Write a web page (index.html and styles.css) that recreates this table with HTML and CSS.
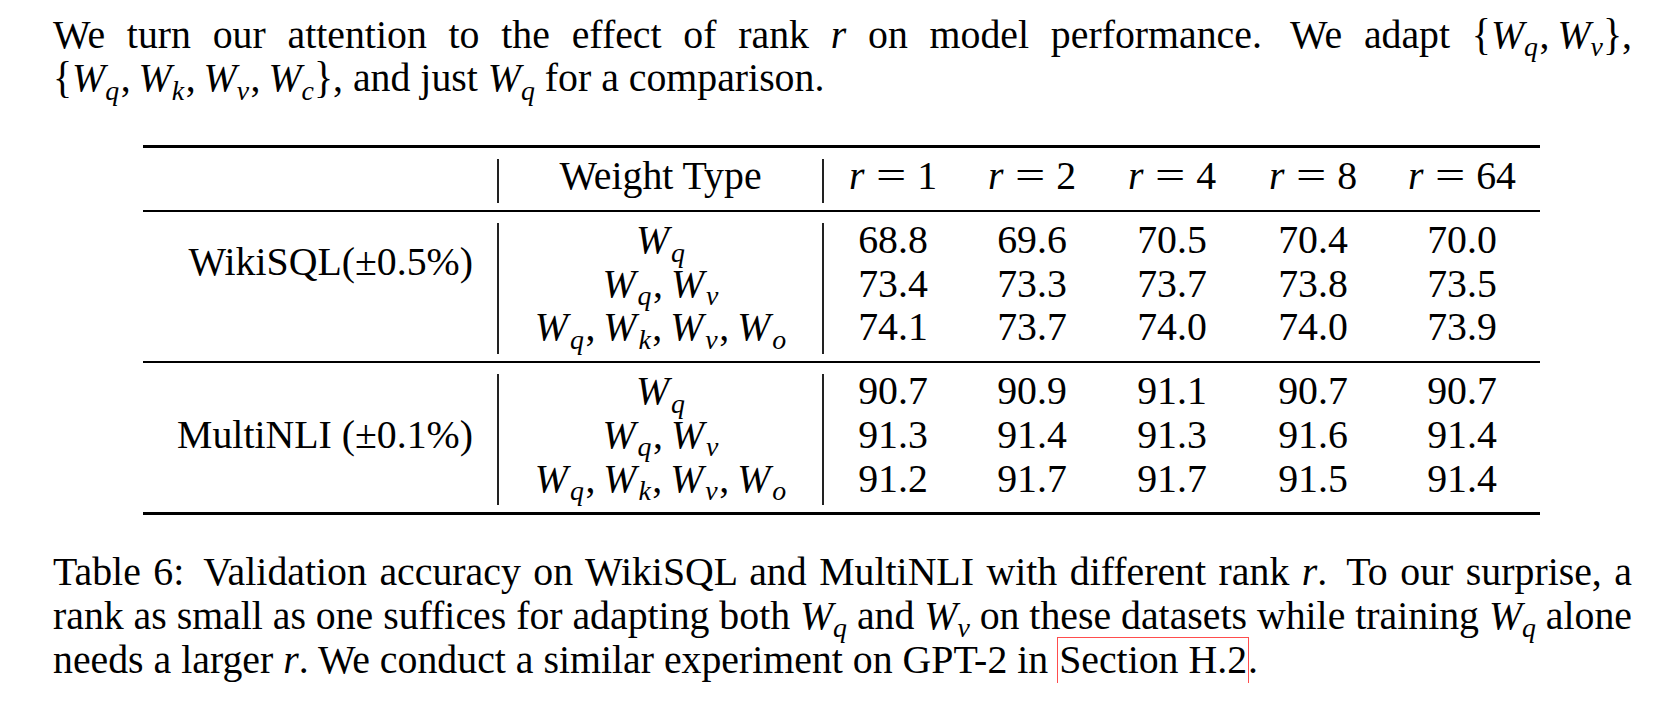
FILE: index.html
```html
<!DOCTYPE html>
<html lang="en">
<head>
<meta charset="utf-8">
<title>Table 6</title>
<link rel="stylesheet" href="styles.css">
</head>
<body>
<div class="page">
  <p class="para">
    <span class="jl">We turn our attention to the effect of rank <i class="m">r</i> on model performance.<span class="ss"></span> We adapt <span class="mx"><span class="br">{</span><i class="w">W</i><sub>q</sub><span class="mc">,</span><i class="w">W</i><sub>v</sub><span class="br">}</span></span>,</span>
    <span class="ll"><span class="mx"><span class="br">{</span><i class="w">W</i><sub>q</sub><span class="mc">,</span><i class="w">W</i><sub>k</sub><span class="mc">,</span><i class="w">W</i><sub>v</sub><span class="mc">,</span><i class="w">W</i><sub>c</sub><span class="br">}</span></span>, and just <span class="mx"><i class="w">W</i><sub>q</sub></span> for a comparison.</span>
  </p>

  <div class="tbl">
    <div class="rule heavy"></div>
    <div class="grp">
      <div class="lab"></div>
      <div class="cells">
        <div class="wt">Weight Type</div>
        <div><i class="m">r</i><span class="eq">=</span>1</div>
        <div><i class="m">r</i><span class="eq">=</span>2</div>
        <div><i class="m">r</i><span class="eq">=</span>4</div>
        <div><i class="m">r</i><span class="eq">=</span>8</div>
        <div><i class="m">r</i><span class="eq">=</span>64</div>
      </div>
    </div>
    <div class="rule light"></div>
    <div class="grp">
      <div class="lab lab-two">WikiSQL(±0.5%)</div>
      <div class="cells">
        <div class="wt"><i class="w">W</i><sub>q</sub></div>
        <div>68.8</div><div>69.6</div><div>70.5</div><div>70.4</div><div>70.0</div>
        <div class="wt"><i class="w">W</i><sub>q</sub><span class="mc">,</span><i class="w">W</i><sub>v</sub></div>
        <div>73.4</div><div>73.3</div><div>73.7</div><div>73.8</div><div>73.5</div>
        <div class="wt"><i class="w">W</i><sub>q</sub><span class="mc">,</span><i class="w">W</i><sub>k</sub><span class="mc">,</span><i class="w">W</i><sub>v</sub><span class="mc">,</span><i class="w">W</i><sub>o</sub></div>
        <div>74.1</div><div>73.7</div><div>74.0</div><div>74.0</div><div>73.9</div>
      </div>
    </div>
    <div class="rule light"></div>
    <div class="grp">
      <div class="lab lab-mid">MultiNLI (±0.1%)</div>
      <div class="cells">
        <div class="wt"><i class="w">W</i><sub>q</sub></div>
        <div>90.7</div><div>90.9</div><div>91.1</div><div>90.7</div><div>90.7</div>
        <div class="wt"><i class="w">W</i><sub>q</sub><span class="mc">,</span><i class="w">W</i><sub>v</sub></div>
        <div>91.3</div><div>91.4</div><div>91.3</div><div>91.6</div><div>91.4</div>
        <div class="wt"><i class="w">W</i><sub>q</sub><span class="mc">,</span><i class="w">W</i><sub>k</sub><span class="mc">,</span><i class="w">W</i><sub>v</sub><span class="mc">,</span><i class="w">W</i><sub>o</sub></div>
        <div>91.2</div><div>91.7</div><div>91.7</div><div>91.5</div><div>91.4</div>
      </div>
    </div>
    <div class="rule heavy"></div>
  </div>

  <p class="cap">
    <span class="jl">Table 6:<span class="ss"></span> Validation accuracy on WikiSQL and MultiNLI with different rank <i class="m">r</i>.<span class="ss"></span> To our surprise, a</span>
    <span class="jl tight">rank as small as one suffices for adapting both <span class="mx"><i class="w">W</i><sub>q</sub></span> and <span class="mx"><i class="w">W</i><sub>v</sub></span> on these datasets while training <span class="mx"><i class="w">W</i><sub>q</sub></span> alone</span>
    <span class="ll">needs a larger <i class="m">r</i>. We conduct a similar experiment on GPT-2 in <span class="lnk">Section H.2</span>.</span>
  </p>
</div>
</body>
</html>
```

FILE: styles.css
```css
html, body {
  margin: 0;
  padding: 0;
  background: #ffffff;
}

body {
  font-family: "Liberation Serif", "Times New Roman", serif;
  font-size: 39.8px;
  color: #000000;
}

.page {
  width: 1579px;
  padding: 13.5px 0 0 53px;
}

.para, .cap {
  margin: 0;
  line-height: 43.8px;
}

.jl {
  display: block;
  text-align: justify;
  text-align-last: justify;
}

.jl.tight {
  word-spacing: -0.06em;
}

.ll {
  display: block;
  text-align: left;
}

.ss {
  display: inline-block;
  width: 0.18em;
}

/* math */
.m {
  font-style: italic;
}

.w {
  font-style: italic;
  letter-spacing: 0.04em;
}

.cells .w {
  letter-spacing: 0.09em;
}

.mx {
  white-space: nowrap;
  word-spacing: 0;
}

.br {
  display: inline-block;
  transform: scaleY(1.12);
}

sub {
  font-size: 0.7em;
  font-style: italic;
  vertical-align: -0.3em;
  line-height: 0;
  margin-left: -0.06em;
}

.mc {
  margin-left: 0.04em;
  margin-right: 0.2em;
}

.eq {
  display: inline-block;
  transform: scaleX(1.35);
  margin: 0 0.38em;
}

/* table */
.tbl {
  width: 1397px;
  margin: 44px 0 0 90px;
}

.rule {
  background: #000000;
}

.rule.heavy {
  height: 3px;
}

.rule.light {
  height: 2px;
}

.grp {
  display: flex;
  padding: 11.3px 0 7px;
}

.lab {
  width: 354px;
  flex: none;
  box-sizing: border-box;
  padding-right: 24px;
  text-align: right;
  line-height: 34.6px;
  white-space: nowrap;
}

.lab-two {
  padding-top: 21.9px;
}

.lab-mid {
  padding-top: 43.8px;
}

.cells {
  display: grid;
  grid-template-columns: 327px 138px 140px 140px 142px 156px;
  grid-auto-rows: 43.6px;
}

.cells > div {
  line-height: 34.6px;
  text-align: center;
  white-space: nowrap;
}

.cells > .wt {
  border-left: 2px solid #222222;
  border-right: 2px solid #222222;
}

/* caption */
.cap {
  margin-top: 36px;
}

.lnk {
  outline: 1px solid #ff4d4d;
  outline-offset: 0;
  padding: 0 1px 5px 1px;
}
```
